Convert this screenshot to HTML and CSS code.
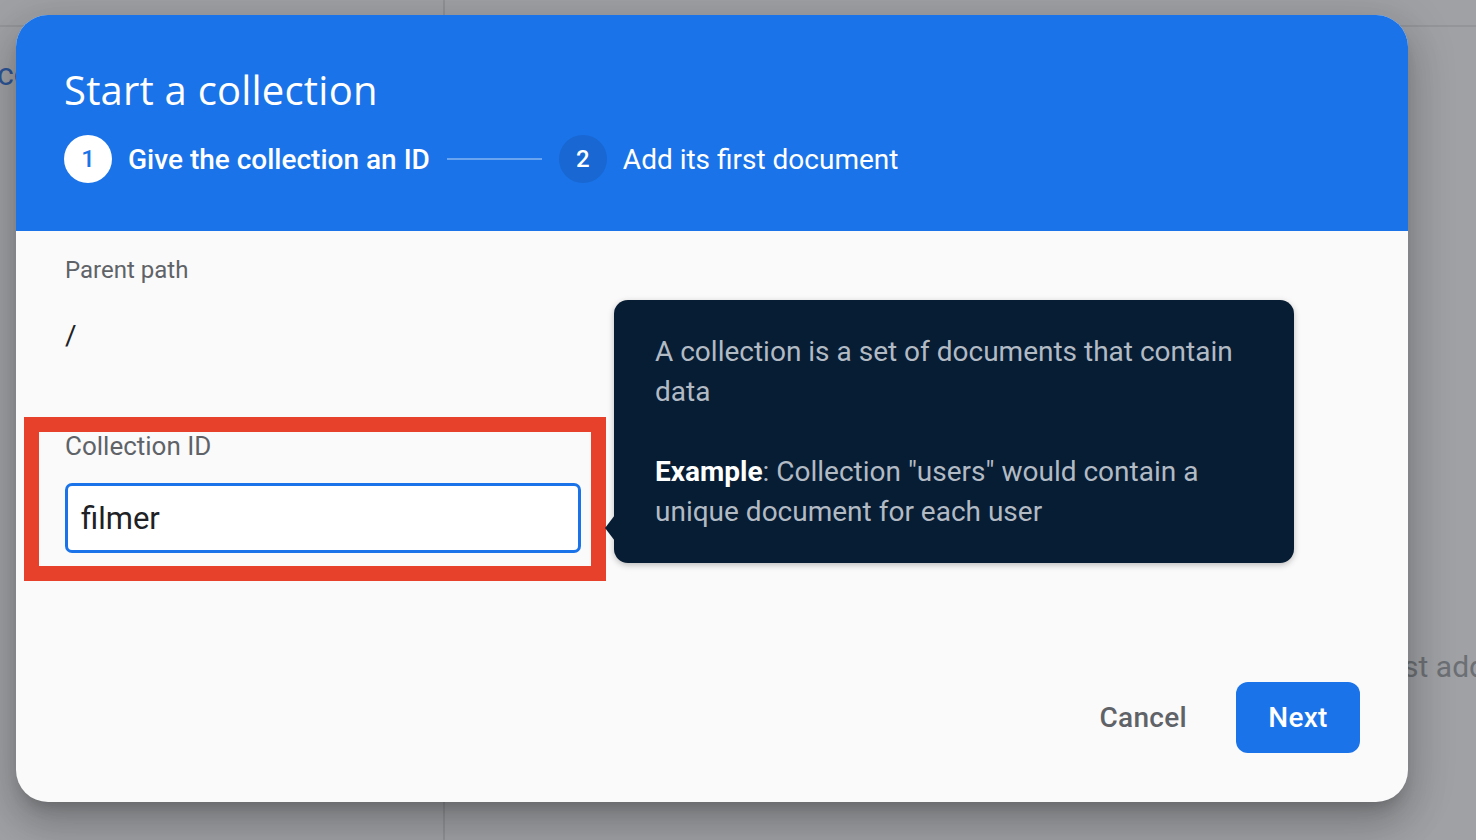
FILE: index.html
```html
<!DOCTYPE html>
<html>
<head>
<meta charset="utf-8">
<link rel="stylesheet" href="styles.css">
</head>
<body>
<div class="page">
  <div class="page-left">
    <div class="page-top"></div>
    <div class="page-left-text">collection</div>
  </div>
  <div class="page-right">
    <div class="page-top"></div>
    <div class="page-right-text">Just add data</div>
  </div>
</div>

<div class="dialog">
  <div class="dialog-header">
    <h1 class="dialog-title">Start a collection</h1>
    <div class="stepper">
      <div class="step step-active">
        <span class="step-num">1</span>
        <span class="step-label">Give the collection an ID</span>
      </div>
      <div class="step-line"></div>
      <div class="step">
        <span class="step-num">2</span>
        <span class="step-label">Add its first document</span>
      </div>
    </div>
  </div>

  <div class="dialog-body">
    <div class="field-label">Parent path</div>
    <div class="path-value">/</div>
    <div class="highlight">
      <div class="field-label">Collection ID</div>
      <div class="input">filmer</div>
    </div>
  </div>

  <div class="dialog-footer">
    <button class="btn btn-text">Cancel</button>
    <button class="btn btn-primary">Next</button>
  </div>

  <div class="tooltip">
    <p>A collection is a set of documents that contain data</p>
    <p><b>Example</b>: Collection "users" would contain a unique document for each user</p>
  </div>
</div>
</body>
</html>
```

FILE: styles.css
```css
* { box-sizing: border-box; }
html, body {
  margin: 0;
  padding: 0;
  width: 1476px;
  height: 840px;
  overflow: hidden;
  background: #9fa1a5;
  font-family: Roboto, "Noto Sans", Arial, sans-serif;
}

.page {
  display: flex;
  height: 840px;
}
.page-left {
  width: 445px;
  flex-shrink: 0;
  border-right: 2px solid #909296;
  overflow: hidden;
}
.page-right {
  flex: 1;
  min-width: 0;
  overflow: hidden;
}
.page-top {
  height: 27px;
  border-bottom: 2px solid #939599;
}
.page-left-text {
  margin-top: 28px;
  margin-left: -3px;
  font-size: 32px;
  color: #2d5597;
  white-space: nowrap;
}
.page-right-text {
  margin-top: 622px;
  padding-left: 925px;
  font-size: 30px;
  color: #6c6f73;
  white-space: nowrap;
}

.dialog {
  position: absolute;
  left: 16px;
  top: 15px;
  width: 1392px;
  height: 787px;
  border-radius: 32px;
  background: #fafafa;
  display: flex;
  flex-direction: column;
  overflow: hidden;
  box-shadow: 0 11px 15px -7px rgba(0,0,0,.2), 0 24px 38px 3px rgba(0,0,0,.14), 0 9px 46px 8px rgba(0,0,0,.12);
}

.dialog-header {
  background: #1a73e8;
  height: 216px;
  padding: 49px 0 0 48px;
  color: #fff;
}
.dialog-title {
  margin: 0;
  font-family: "Open Sans", Roboto, sans-serif;
  font-weight: 400;
  font-size: 40px;
  line-height: 52px;
  letter-spacing: 0.2px;
}
.stepper {
  margin-top: 19px;
  display: flex;
  align-items: center;
  height: 48px;
}
.step {
  display: flex;
  align-items: center;
  gap: 16px;
}
.step-num {
  width: 48px;
  height: 48px;
  border-radius: 50%;
  background: #1967d2;
  color: #fff;
  display: flex;
  align-items: center;
  justify-content: center;
  font-size: 24px;
  font-weight: 500;
}
.step-active .step-num {
  background: #fff;
  color: #1a73e8;
}
.step-label {
  font-size: 28px;
  font-weight: 400;
  white-space: nowrap;
}
.step-active .step-label {
  font-weight: 500;
}
.step-line {
  width: 95px;
  height: 2px;
  margin: 0 17px;
  background: rgba(255,255,255,0.35);
}

.dialog-body {
  flex: 1;
  padding: 23px 0 0 49px;
}
.field-label {
  font-size: 24px;
  line-height: 32px;
  color: #5f6368;
}
.path-value {
  margin-top: 32px;
  font-size: 28px;
  line-height: 36px;
  color: #202124;
}
.highlight {
  margin: 63px 0 0 -41px;
  width: 582px;
  border: 15px solid #e8412b;
  padding: 0 10px 13px 26px;
}
.highlight .field-label {
  font-size: 26px;
  line-height: 28px;
}
.input {
  margin-top: 23px;
  height: 70px;
  border: 3px solid #1a73e8;
  border-radius: 7px;
  background: #fff;
  padding: 0 13px;
  display: flex;
  align-items: center;
  font-size: 31px;
  color: #202124;
}

.dialog-footer {
  display: flex;
  justify-content: flex-end;
  align-items: center;
  gap: 25px;
  padding: 0 48px 49px 0;
}
.btn {
  border: none;
  font-family: Roboto, sans-serif;
  font-size: 28px;
  font-weight: 500;
  letter-spacing: 0.3px;
  height: 71px;
  border-radius: 12px;
  cursor: pointer;
}
.btn-text {
  background: transparent;
  color: #5f6368;
  padding: 0 24px;
}
.btn-primary {
  background: #1a73e8;
  color: #fff;
  width: 124px;
}

.tooltip {
  position: absolute;
  left: 598px;
  top: 285px;
  width: 680px;
  height: 263px;
  background: #071d34;
  border-radius: 14px;
  padding: 32px 40px 0 41px;
  color: #b2bac4;
  font-size: 28px;
  line-height: 40px;
  box-shadow: 0 2px 6px rgba(0,0,0,.25);
}
.tooltip p {
  margin: 0 0 40px 0;
}
.tooltip b {
  color: #fff;
  font-weight: 700;
}
.tooltip::before {
  content: "";
  position: absolute;
  left: -9px;
  top: 215px;
  border-style: solid;
  border-width: 13px 10px 13px 0;
  border-color: transparent #071d34 transparent transparent;
}
```
